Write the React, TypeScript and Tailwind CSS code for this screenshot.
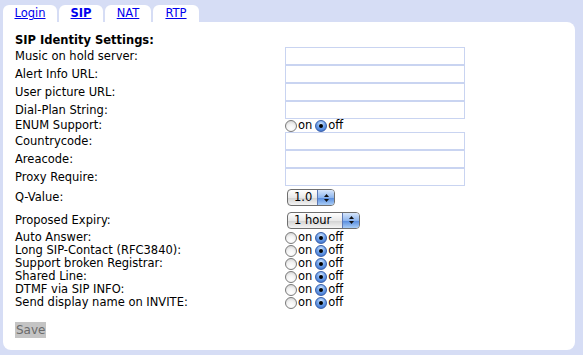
import React from "react";

const font = { fontFamily: '"DejaVu Sans", Verdana, sans-serif' };

function Radio({ checked }: { checked?: boolean }) {
  if (checked) {
    return (
      <span className="relative inline-block w-[12px] h-[12px] rounded-full border border-[#3a5fa8] bg-[radial-gradient(circle_at_50%_30%,#d6e8ff_0%,#6fa2ea_45%,#2f63c4_100%)]">
        <span className="absolute left-[3px] top-[3px] w-[4px] h-[4px] rounded-full bg-black" />
      </span>
    );
  }
  return (
    <span className="inline-block w-[12px] h-[12px] rounded-full border border-[#7a7a7a] bg-[radial-gradient(circle_at_50%_75%,#ffffff_0%,#f2f2f2_50%,#c9c9c9_100%)]" />
  );
}

function OnOff() {
  return (
    <div className="flex items-center h-full">
      <Radio />
      <span className="ml-[1px] mr-[3px]">on</span>
      <Radio checked />
      <span className="ml-[1px]">off</span>
    </div>
  );
}

function TextInput() {
  return <div className="w-[180px] h-[18px] border border-[#c9d4f1] bg-white" />;
}

function Select({ value, width, arrowW }: { value: string; width: number; arrowW: number }) {
  return (
    <div
      className="flex h-[17px] rounded-[4px] border border-[#6f6f6f] overflow-hidden bg-[linear-gradient(#ffffff,#e9e9e9_50%,#d4d4d4_55%,#f4f4f4)]"
      style={{ width }}
    >
      <div className="flex-1 pl-[6px] leading-[15px]">{value}</div>
      <div
        className="flex flex-col items-center justify-center gap-[2px] border-l border-[#5c78b5] bg-[linear-gradient(#d7e6fb,#8fb6ee_50%,#5b8fe0_55%,#a9cdf6)]"
        style={{ width: arrowW }}
      >
        <svg width="5" height="3" viewBox="0 0 5 3"><path d="M0 3 L2.5 0 L5 3 Z" fill="#111" /></svg>
        <svg width="5" height="3" viewBox="0 0 5 3"><path d="M0 0 L2.5 3 L5 0 Z" fill="#111" /></svg>
      </div>
    </div>
  );
}

function Row({ label, h, children }: { label: string; h: number; children?: React.ReactNode }) {
  return (
    <div className="flex items-center" style={{ height: h }}>
      <div className="w-[270px] leading-[13px]">{label}</div>
      <div className="flex items-center h-full">{children}</div>
    </div>
  );
}

const tabs = [
  { name: "Login", w: 54 },
  { name: "SIP", w: 44, active: true },
  { name: "NAT", w: 46 },
  { name: "RTP", w: 46 },
];

export default function App() {
  return (
    <div className="w-[583px] h-[355px] bg-[#d6ddf5] pt-[5px] pl-[3px] pr-[8px] pb-[5px] text-[11.5px] text-black" style={font}>
      <div className="flex gap-[2px] h-[17px]">
        {tabs.map((t) => (
          <div
            key={t.name}
            className="bg-white rounded-t-[6px] flex items-center justify-center pt-[1px]"
            style={{ width: t.w }}
          >
            <a href="#" className={"text-[#0000ee] underline " + (t.active ? "font-bold" : "")}>
              {t.name}
            </a>
          </div>
        ))}
      </div>
      <div className="bg-white h-[328px] rounded-tr-[8px] rounded-b-[8px] pl-[12px] pt-[12px]">
        <div className="h-[13px] font-bold leading-[13px]">SIP Identity Settings:</div>
        <Row label="Music on hold server:" h={18}><TextInput /></Row>
        <Row label="Alert Info URL:" h={18}><TextInput /></Row>
        <Row label="User picture URL:" h={18}><TextInput /></Row>
        <Row label="Dial-Plan String:" h={18}><TextInput /></Row>
        <Row label="ENUM Support:" h={13}><OnOff /></Row>
        <Row label="Countrycode:" h={18}><TextInput /></Row>
        <Row label="Areacode:" h={18}><TextInput /></Row>
        <Row label="Proxy Require:" h={18}><TextInput /></Row>
        <Row label="Q-Value:" h={23}>
          <div className="pl-[2px]"><Select value="1.0" width={48} arrowW={17} /></div>
        </Row>
        <Row label="Proposed Expiry:" h={22}>
          <div className="pl-[2px]"><Select value="1 hour" width={73} arrowW={17} /></div>
        </Row>
        <Row label="Auto Answer:" h={13}><OnOff /></Row>
        <Row label="Long SIP-Contact (RFC3840):" h={13}><OnOff /></Row>
        <Row label="Support broken Registrar:" h={13}><OnOff /></Row>
        <Row label="Shared Line:" h={13}><OnOff /></Row>
        <Row label="DTMF via SIP INFO:" h={13}><OnOff /></Row>
        <Row label="Send display name on INVITE:" h={13}><OnOff /></Row>
        <div className="mt-[13px]">
          <button className="h-[16px] px-[1px] bg-[#c4c4c4] text-[#6a6a6a] text-[12px] leading-[16px]" style={font}>
            Save
          </button>
        </div>
      </div>
    </div>
  );
}
